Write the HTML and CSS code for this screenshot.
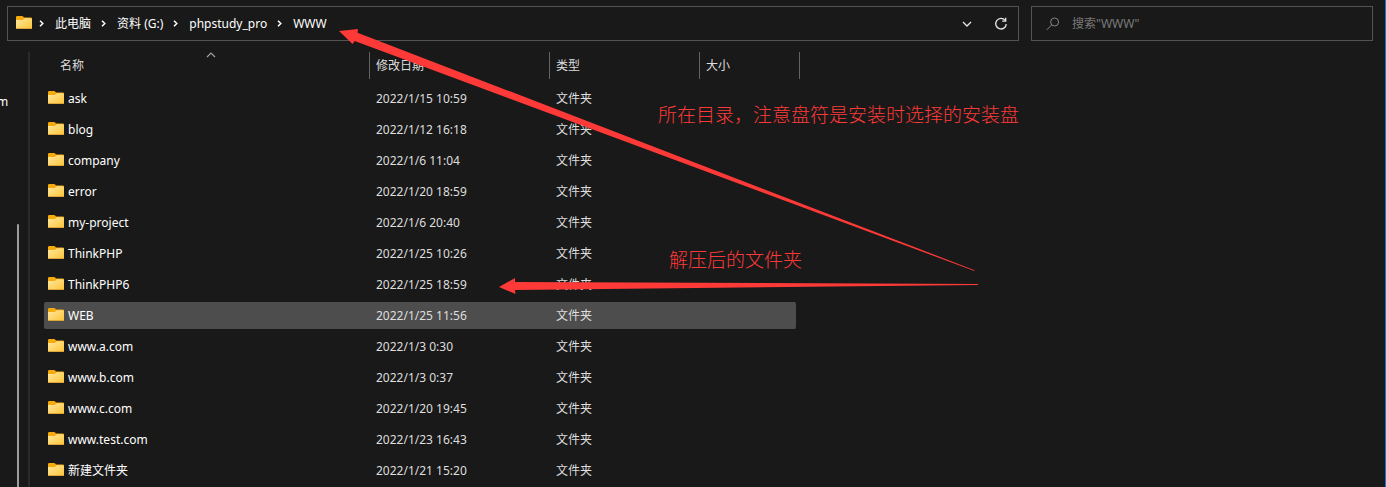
FILE: index.html
```html
<!DOCTYPE html>
<html lang="zh-CN">
<head>
  <meta charset="UTF-8" />
  <meta name="viewport" content="width=device-width, initial-scale=1.0" />
  <title>WWW</title>
  <link rel="stylesheet" href="styles.css">
</head>
<body>
  <!-- shared icons -->
  <svg class="defs" width="0" height="0" aria-hidden="true">
    <defs>
      <linearGradient id="folderFront" x1="0" y1="0" x2="1" y2="1">
        <stop offset="0" stop-color="#ffe8a0" />
        <stop offset="1" stop-color="#fcc436" />
      </linearGradient>
      <symbol id="folder" viewBox="0 0 16 13">
        <path d="M0 1.2Q0 0 1.2 0H6Q6.9 0 7.4.7L8 1.6H14.8Q16 1.6 16 2.8V11H0Z" fill="#f5ab0c" />
        <path d="M0 4H6.4Q7.2 4 7.7 3.3L8.4 2.3H15Q16 2.3 16 3.3V11.8Q16 13 14.8 13H1.2Q0 13 0 11.8Z" fill="url(#folderFront)" />
        <path d="M.3 12.5H15.7" stroke="#e0a63a" stroke-width="1" />
      </symbol>
      <symbol id="chevron" viewBox="0 0 5 7">
        <path d="M1 .8L3.8 3.5L1 6.2" fill="none" stroke="#fff" stroke-width="1.5" />
      </symbol>
    </defs>
  </svg>

  <header class="toolbar">
    <nav class="address" aria-label="地址">
      <svg class="folder"><use href="#folder" /></svg>
      <svg class="chevron"><use href="#chevron" /></svg>
      <a href="#">此电脑</a>
      <svg class="chevron"><use href="#chevron" /></svg>
      <a href="#">资料 (G:)</a>
      <svg class="chevron"><use href="#chevron" /></svg>
      <a href="#">phpstudy_pro</a>
      <svg class="chevron"><use href="#chevron" /></svg>
      <a href="#">WWW</a>
      <div class="address-actions">
        <button type="button" aria-label="历史记录">
          <svg width="10" height="6" viewBox="0 0 10 6"><path d="M1 1L5 5L9 1" fill="none" stroke="#e6e6e6" stroke-width="1.3" /></svg>
        </button>
        <button type="button" aria-label="刷新">
          <svg width="14" height="14" viewBox="0 0 14 14">
            <path d="M11.2 3.4A5.3 5.3 0 1 0 12.3 7" fill="none" stroke="#e6e6e6" stroke-width="1.3" />
            <path d="M11.7 .8V4.2H8.2" fill="none" stroke="#e6e6e6" stroke-width="1.3" />
          </svg>
        </button>
      </div>
    </nav>
    <label class="search">
      <svg width="14" height="14" viewBox="0 0 14 14">
        <circle cx="8.6" cy="5" r="4" fill="none" stroke="#858585" />
        <path d="M5.7 7.9L.8 12.8" stroke="#858585" />
      </svg>
      <input type="text" placeholder='搜索"WWW"' aria-label="搜索">
    </label>
  </header>

  <div class="content">
    <aside class="sidebar">
      <span class="sidebar-item">m</span>
      <div class="scroll-thumb"></div>
    </aside>

    <main>
      <table class="files">
        <colgroup>
          <col class="col-name">
          <col class="col-date">
          <col class="col-type">
          <col class="col-size">
        </colgroup>
        <thead>
          <tr>
            <th>
              <div class="head head-name">名称
                <svg class="sort" viewBox="0 0 10 6"><path d="M1 5L5 1L9 5" fill="none" stroke="#a0a0a0" stroke-width="1.2" /></svg>
              </div>
            </th>
            <th><div class="head">修改日期</div></th>
            <th><div class="head">类型</div></th>
            <th><div class="head">大小</div></th>
          </tr>
        </thead>
        <tbody>
          <tr><td><div class="name"><svg class="folder"><use href="#folder" /></svg>ask</div></td><td>2022/1/15 10:59</td><td>文件夹</td><td></td></tr>
          <tr><td><div class="name"><svg class="folder"><use href="#folder" /></svg>blog</div></td><td>2022/1/12 16:18</td><td>文件夹</td><td></td></tr>
          <tr><td><div class="name"><svg class="folder"><use href="#folder" /></svg>company</div></td><td>2022/1/6 11:04</td><td>文件夹</td><td></td></tr>
          <tr><td><div class="name"><svg class="folder"><use href="#folder" /></svg>error</div></td><td>2022/1/20 18:59</td><td>文件夹</td><td></td></tr>
          <tr><td><div class="name"><svg class="folder"><use href="#folder" /></svg>my-project</div></td><td>2022/1/6 20:40</td><td>文件夹</td><td></td></tr>
          <tr><td><div class="name"><svg class="folder"><use href="#folder" /></svg>ThinkPHP</div></td><td>2022/1/25 10:26</td><td>文件夹</td><td></td></tr>
          <tr><td><div class="name"><svg class="folder"><use href="#folder" /></svg>ThinkPHP6</div></td><td>2022/1/25 18:59</td><td>文件夹</td><td></td></tr>
          <tr class="active"><td><div class="name"><svg class="folder"><use href="#folder" /></svg>WEB</div></td><td>2022/1/25 11:56</td><td>文件夹</td><td></td></tr>
          <tr><td><div class="name"><svg class="folder"><use href="#folder" /></svg>www.a.com</div></td><td>2022/1/3 0:30</td><td>文件夹</td><td></td></tr>
          <tr><td><div class="name"><svg class="folder"><use href="#folder" /></svg>www.b.com</div></td><td>2022/1/3 0:37</td><td>文件夹</td><td></td></tr>
          <tr><td><div class="name"><svg class="folder"><use href="#folder" /></svg>www.c.com</div></td><td>2022/1/20 19:45</td><td>文件夹</td><td></td></tr>
          <tr><td><div class="name"><svg class="folder"><use href="#folder" /></svg>www.test.com</div></td><td>2022/1/23 16:43</td><td>文件夹</td><td></td></tr>
          <tr><td><div class="name"><svg class="folder"><use href="#folder" /></svg>新建文件夹</div></td><td>2022/1/21 15:20</td><td>文件夹</td><td></td></tr>
        </tbody>
      </table>
    </main>
  </div>

  <!-- annotations drawn over the window -->
  <svg class="arrows" width="980" height="300" viewBox="0 0 980 300" aria-hidden="true">
    <polygon points="339,31 358,29 357.5,32.7 974.6,270.2 974.4,271 354.7,41 352.5,44" />
    <polygon points="499,287 515,278 515,282 978,284 978,285 515,290 515.5,294" />
  </svg>
  <p class="note note-path">所在目录，注意盘符是安装时选择的安装盘</p>
  <p class="note note-folder">解压后的文件夹</p>
</body>
</html>
```

FILE: styles.css
```css
* {
  box-sizing: border-box;
}

body {
  display: flex;
  flex-direction: column;
  height: 100vh;
  margin: 0;
  position: relative;
  overflow: hidden;
  background: #191919;
  border-right: 1px solid #0f78d0;
  color: #fff;
  font-family: "Noto Sans", "Noto Sans CJK SC", sans-serif;
  font-size: 12px;
  line-height: 18px;
}

.defs {
  position: absolute;
}

.folder {
  width: 16px;
  height: 13px;
  margin-bottom: 2px;
  flex: none;
}

/* toolbar */
.toolbar {
  display: flex;
  gap: 12px;
  padding: 6px 12px 0 7px;
}

.address,
.search {
  display: flex;
  align-items: center;
  height: 35px;
  border: 1px solid #535353;
}

.address {
  flex: 1;
  padding: 0 10px 0 8px;
}

.address a {
  color: #fff;
  text-decoration: none;
}

.chevron {
  width: 5px;
  height: 7px;
  margin: 0 11px 0 10px;
  flex: none;
}

.address .folder + .chevron {
  margin-left: 7px;
}

.address-actions {
  display: flex;
  gap: 20px;
  margin-left: auto;
}

.address-actions button {
  display: flex;
  align-items: center;
  justify-content: center;
  width: 14px;
  height: 20px;
  padding: 0;
  border: 0;
  background: none;
}

.search {
  flex: 0 0 342px;
  gap: 12px;
  padding: 0 14px;
}

.search input {
  flex: 1;
  padding: 0;
  border: 0;
  outline: 0;
  background: none;
  color: #fff;
  font: inherit;
}

.search input::placeholder {
  color: #7a7a7a;
}

/* content */
.content {
  display: flex;
  flex: 1;
  min-height: 0;
}

.sidebar {
  display: flex;
  justify-content: space-between;
  width: 30px;
  margin-top: 11px;
  padding-right: 9px;
  border-right: 2px solid #2a2a2a;
}

.sidebar-item {
  margin-top: 41px;
  margin-left: -3px;
}

.scroll-thumb {
  width: 2px;
  margin-top: 172px;
  background: #9d9d9d;
  border-radius: 1px 1px 0 0;
}

main {
  flex: 1;
  padding: 7px 0 0 14px;
}

.files {
  width: 756px;
  table-layout: fixed;
  border-collapse: separate;
  border-spacing: 0 4px;
}

.col-name {
  width: 326px;
}

.col-date {
  width: 180px;
}

.col-type {
  width: 150px;
}

.files th {
  height: 29px;
  padding: 0;
  vertical-align: top;
  font-weight: normal;
  text-align: left;
}

.head {
  position: relative;
  height: 27px;
  padding-left: 6px;
  border-right: 1px solid #636363;
  color: #dedede;
  line-height: 27px;
}

.head-name {
  margin-left: 8px;
  padding-left: 8px;
}

.sort {
  position: absolute;
  top: 0;
  left: 50%;
  width: 10px;
  height: 6px;
  margin-left: -5px;
}

.files td {
  height: 27px;
  padding: 0 0 0 6px;
  color: #dedede;
}

.files td:first-child {
  padding-left: 4px;
  color: #fff;
  border-radius: 2px 0 0 2px;
}

.files td:last-child {
  border-right: 4px solid transparent;
  border-radius: 0 5px 5px 0;
  background-clip: padding-box;
}

.active td {
  background-color: #4d4d4d;
}

.name {
  display: flex;
  align-items: center;
  gap: 4px;
}

/* annotations */
.arrows {
  position: absolute;
  top: 0;
  left: 0;
  fill: #fd3a38;
}

.note {
  position: absolute;
  margin: 0;
  color: #fd3a38;
  font-family: "Noto Sans CJK SC", sans-serif;
  font-size: 19px;
  font-weight: 300;
  line-height: 28px;
  white-space: nowrap;
}

.note-path {
  top: 100px;
  left: 658px;
}

.note-folder {
  top: 245px;
  left: 669px;
}
```
